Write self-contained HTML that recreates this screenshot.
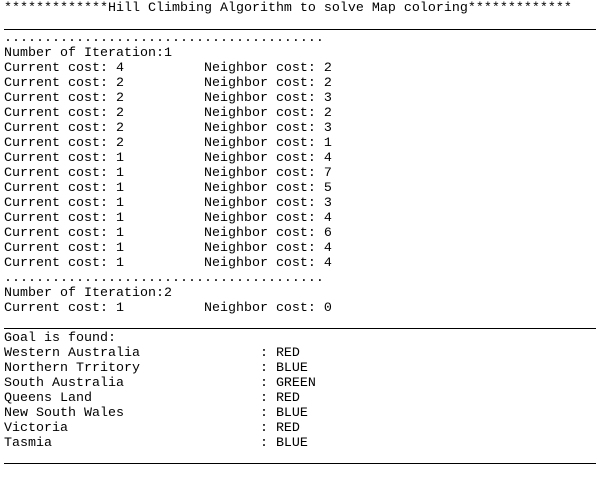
<!DOCTYPE html>
<html><head><style>
html,body{margin:0;padding:0;background:#fff;width:611px;height:491px;overflow:hidden}
.l{position:absolute;left:4px;font-family:"Liberation Mono",monospace;font-size:13.33px;line-height:15px;white-space:pre;color:#000}
.r{position:absolute;left:4px;width:592px;height:1px;background:#000}
</style></head><body>
<div class="l" style="top:1px">*************Hill Climbing Algorithm to solve Map coloring*************</div>
<div class="r" style="top:29px"></div>
<div class="l" style="top:31px">........................................
Number of Iteration:1
Current cost: 4          Neighbor cost: 2
Current cost: 2          Neighbor cost: 2
Current cost: 2          Neighbor cost: 3
Current cost: 2          Neighbor cost: 2
Current cost: 2          Neighbor cost: 3
Current cost: 2          Neighbor cost: 1
Current cost: 1          Neighbor cost: 4
Current cost: 1          Neighbor cost: 7
Current cost: 1          Neighbor cost: 5
Current cost: 1          Neighbor cost: 3
Current cost: 1          Neighbor cost: 4
Current cost: 1          Neighbor cost: 6
Current cost: 1          Neighbor cost: 4
Current cost: 1          Neighbor cost: 4
........................................
Number of Iteration:2
Current cost: 1          Neighbor cost: 0</div>
<div class="r" style="top:328px"></div>
<div class="l" style="top:331px">Goal is found:
Western Australia               : RED
Northern Trritory               : BLUE
South Australia                 : GREEN
Queens Land                     : RED
New South Wales                 : BLUE
Victoria                        : RED
Tasmia                          : BLUE</div>
<div class="r" style="top:463px"></div>
</body></html>
